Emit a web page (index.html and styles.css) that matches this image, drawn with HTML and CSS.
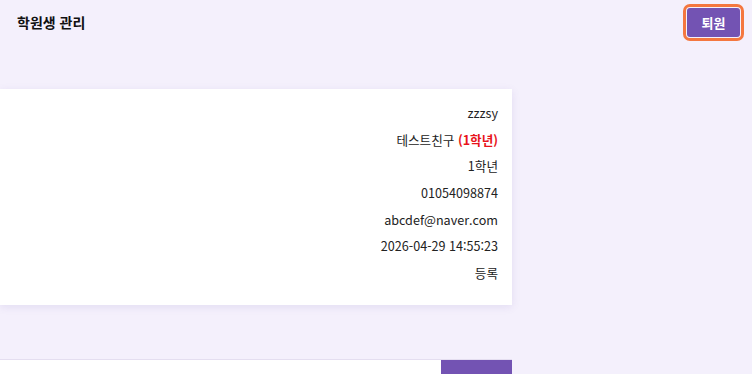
FILE: index.html
```html
<!DOCTYPE html>
<html lang="ko">
<head>
  <meta charset="UTF-8">
  <meta name="viewport" content="width=device-width, initial-scale=1.0">
  <title>학원생 관리</title>
  <link rel="stylesheet" href="styles.css">
</head>
<body>
  <header class="topbar">
    <h1 class="page-title">학원생 관리</h1>
    <button class="btn-leave" type="button">퇴원</button>
  </header>

  <main class="content">
    <section class="detail-card">
      <div class="detail-row">zzzsy</div>
      <div class="detail-row">테스트친구 <span class="grade-tag">(1학년)</span></div>
      <div class="detail-row">1학년</div>
      <div class="detail-row">01054098874</div>
      <div class="detail-row">abcdef@naver.com</div>
      <div class="detail-row">2026-04-29 14:55:23</div>
      <div class="detail-row">등록</div>
    </section>

    <section class="next-card">
      <div class="next-fill"></div>
      <div class="next-action"></div>
    </section>
  </main>
</body>
</html>
```

FILE: styles.css
```css
body {
  margin: 0;
  background: #f4f0fc;
  font-family: "Noto Sans CJK KR", "Noto Sans", sans-serif;
  color: #222;
  overflow: hidden;
  height: 374px;
}
.topbar {
  display: flex;
  align-items: center;
  justify-content: space-between;
  height: 44px;
  padding: 0 12px 0 17px;
}
.page-title {
  margin: 0;
  font-size: 14px;
  font-weight: 700;
  color: #111;
}
.btn-leave {
  width: 53px;
  height: 29px;
  border: none;
  border-radius: 3px;
  background: #7353b3;
  color: #fff;
  font-family: inherit;
  font-size: 13px;
  font-weight: 700;
  outline: 3px solid #f4773f;
  outline-offset: 1px;
}
.content {
  width: 512px;
  padding-top: 45px;
}
.detail-card {
  background: #fff;
  box-shadow: 0 2px 8px rgba(110, 80, 170, 0.12);
  padding: 11px 14px 18px 0;
  text-align: right;
  font-size: 12.6px;
  color: #222;
}
.detail-row {
  line-height: 26.67px;
}
.grade-tag {
  color: #e8141b;
  font-weight: 700;
}
.next-card {
  display: flex;
  margin-top: 54px;
  height: 20px;
  border-top: 1px solid #e4def0;
  background: #fff;
}
.next-fill {
  flex: 1;
}
.next-action {
  width: 71px;
  background: #7353b3;
}
```
